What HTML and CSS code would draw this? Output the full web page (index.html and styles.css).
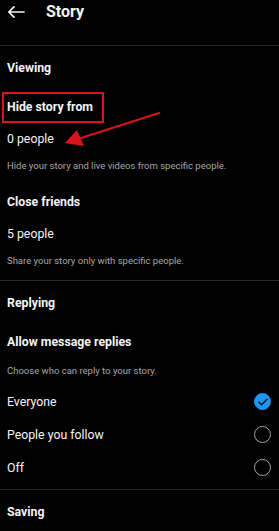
FILE: index.html
```html
<!DOCTYPE html>
<html lang="en">

<head>
    <meta charset="UTF-8">
    <meta name="viewport" content="width=device-width, initial-scale=1.0">
    <title>Story</title>
    <link rel="stylesheet" href="styles.css">
</head>

<body>
    <header class="top-bar">
        <svg class="back-icon" width="18" height="14" viewBox="0 0 18 14">
            <path d="M17 7H2M7 1.8L1.8 7L7 12.2" fill="none" stroke="#f5f5f5" stroke-width="1.7" stroke-linecap="round" stroke-linejoin="round"/>
        </svg>
        <h1>Story</h1>
    </header>

    <main>
        <section class="section">
            <h2 class="section-title">Viewing</h2>
            <div class="setting">
                <div class="setting-title"><span class="highlight">Hide story from</span></div>
                <div class="setting-value">0 people</div>
                <p class="setting-desc">Hide your story and live videos from specific people.</p>
            </div>
            <div class="setting">
                <div class="setting-title">Close friends</div>
                <div class="setting-value">5 people</div>
                <p class="setting-desc">Share your story only with specific people.</p>
            </div>
        </section>

        <section class="section">
            <h2 class="section-title">Replying</h2>
            <div class="setting-title">Allow message replies</div>
            <p class="setting-desc">Choose who can reply to your story.</p>
            <ul class="options">
                <li class="option">
                    <span>Everyone</span>
                    <span class="radio checked">
                        <svg width="10" height="8" viewBox="0 0 10 8">
                            <path d="M1 4.2L3.7 6.8L9 1.3" fill="none" stroke="#111" stroke-width="1.3" stroke-linecap="round" stroke-linejoin="round"/>
                        </svg>
                    </span>
                </li>
                <li class="option">
                    <span>People you follow</span>
                    <span class="radio"></span>
                </li>
                <li class="option">
                    <span>Off</span>
                    <span class="radio"></span>
                </li>
            </ul>
        </section>

        <section class="section">
            <h2 class="section-title">Saving</h2>
        </section>
    </main>

    <!-- annotation arrow drawn over the screenshot -->
    <svg class="pointer" width="279" height="160" viewBox="0 0 279 160">
        <line x1="159" y1="113" x2="78" y2="139" stroke="#d8131b" stroke-width="2.3" stroke-linecap="round"/>
        <polygon points="65,143 77,130 84,146" fill="#d8131b"/>
    </svg>
</body>

</html>
```

FILE: styles.css
```css
* {
    margin: 0;
    padding: 0;
    box-sizing: border-box;
}

body {
    font-family: Roboto, "Noto Sans", sans-serif;
    background-color: #000;
    color: #f5f5f5;
    position: relative;
    width: 279px;
    height: 531px;
    overflow: hidden;
}

.top-bar {
    display: flex;
    align-items: center;
    height: 46px;
    padding: 0 0 22px 7px;
    border-bottom: 1px solid #262626;
}

.back-icon {
    margin-right: 21px;
}

.top-bar h1 {
    font-size: 16px;
    font-weight: 700;
    line-height: 20px;
}

.section {
    border-bottom: 1px solid #262626;
    padding-left: 7px;
}

.section:last-child {
    border-bottom: none;
}

.section-title {
    font-size: 12.3px;
    font-weight: 700;
    height: 44px;
    line-height: 44px;
}

.setting {
    padding-bottom: 7px;
}

.setting-title {
    display: flex;
    align-items: center;
    height: 34px;
    font-size: 12.3px;
    font-weight: 700;
}

.highlight {
    display: inline-block;
    line-height: 27px;
    border: 2px solid #d8131b;
    padding: 0 9px 0 3px;
    margin-left: -5px;
}

.setting-value {
    height: 30px;
    line-height: 30px;
    font-size: 12.3px;
}

.setting-desc {
    height: 24px;
    line-height: 24px;
    font-size: 9.5px;
    color: #a8a8a8;
}

.options {
    list-style: none;
    padding: 2px 0 5px;
}

.option {
    display: flex;
    align-items: center;
    justify-content: space-between;
    height: 33px;
    font-size: 12.3px;
    padding-right: 8px;
}

.radio {
    display: flex;
    align-items: center;
    justify-content: center;
    width: 17px;
    height: 17px;
    border: 1.4px solid #a8a8a8;
    border-radius: 50%;
}

.radio.checked {
    background-color: #1d95f2;
    border-color: #1d95f2;
}

.pointer {
    position: absolute;
    top: 0;
    left: 0;
}
```
